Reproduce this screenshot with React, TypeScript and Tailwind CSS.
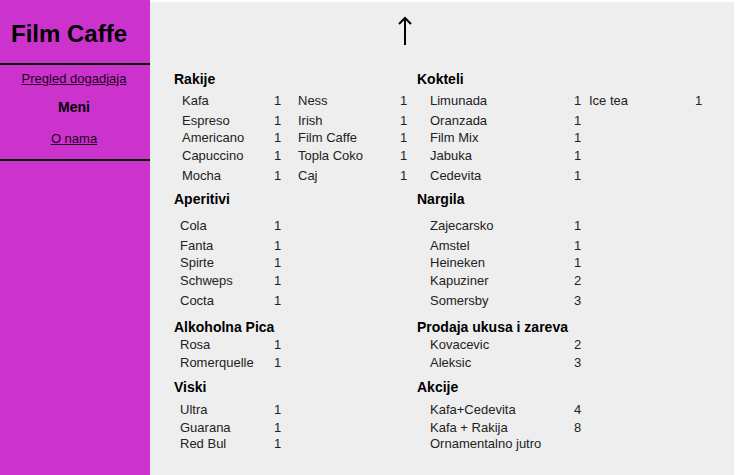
type Item = [name: string, price: string];
type Row = Item[];

interface MenuSection {
  title: string;
  rows: Row[];
  /** Space above the heading and between the heading and the table */
  spacing: string;
  /** Left inset of the item table */
  inset: string;
  /** Column widths: name, price, second name; the last price takes the rest */
  columns: [string, string, string];
}

const ROW_HEIGHTS = ['h-5', 'h-[17px]', 'h-[18px]', 'h-5', 'h-4'];
const SHORT_ROW_HEIGHTS = ['h-[18px]', 'h-4', 'h-4'];

const LEFT_COLUMNS: [string, string, string] = ['w-[94px]', 'w-6', 'w-[102px]'];
const RIGHT_COLUMNS: [string, string, string] = ['w-36', 'w-[15px]', 'w-[106px]'];

const sections: MenuSection[] = [
  {
    title: 'Rakije',
    spacing: 'gap-1.5',
    inset: 'pl-2',
    columns: ['w-[92px]', 'w-6', 'w-[102px]'],
    rows: [
      [['Kafa', '1'], ['Ness', '1']],
      [['Espreso', '1'], ['Irish', '1']],
      [['Americano', '1'], ['Film Caffe', '1']],
      [['Capuccino', '1'], ['Topla Coko', '1']],
      [['Mocha', '1'], ['Caj', '1']],
    ],
  },
  {
    title: 'Kokteli',
    spacing: 'gap-1.5',
    inset: 'pl-[13px]',
    columns: RIGHT_COLUMNS,
    rows: [
      [['Limunada', '1'], ['Ice tea', '1']],
      [['Oranzada', '1']],
      [['Film Mix', '1']],
      [['Jabuka', '1']],
      [['Cedevita', '1']],
    ],
  },
  {
    title: 'Aperitivi',
    spacing: 'mt-[7px] gap-[11px]',
    inset: 'pl-1.5',
    columns: LEFT_COLUMNS,
    rows: [[['Cola', '1']], [['Fanta', '1']], [['Spirte', '1']], [['Schweps', '1']], [['Cocta', '1']]],
  },
  {
    title: 'Nargila',
    spacing: 'mt-[7px] gap-[11px]',
    inset: 'pl-[13px]',
    columns: RIGHT_COLUMNS,
    rows: [
      [['Zajecarsko', '1']],
      [['Amstel', '1']],
      [['Heineken', '1']],
      [['Kapuziner', '2']],
      [['Somersby', '3']],
    ],
  },
  {
    title: 'Alkoholna Pica',
    spacing: 'mt-2.5 gap-0.5',
    inset: 'pl-1.5',
    columns: LEFT_COLUMNS,
    rows: [[['Rosa', '1']], [['Romerquelle', '1']]],
  },
  {
    title: 'Prodaja ukusa i zareva',
    spacing: 'mt-2.5 gap-0.5',
    inset: 'pl-[13px]',
    columns: RIGHT_COLUMNS,
    rows: [[['Kovacevic', '2']], [['Aleksic', '3']]],
  },
  {
    title: 'Viski',
    spacing: 'mt-2 gap-[7px]',
    inset: 'pl-1.5',
    columns: LEFT_COLUMNS,
    rows: [[['Ultra', '1']], [['Guarana', '1']], [['Red Bul', '1']]],
  },
  {
    title: 'Akcije',
    spacing: 'mt-2 gap-[7px]',
    inset: 'pl-[13px]',
    columns: RIGHT_COLUMNS,
    rows: [[['Kafa+Cedevita', '4']], [['Kafa + Rakija', '8']], [['Ornamentalno jutro', '']]],
  },
];

function Section({ title, rows, spacing, inset, columns }: MenuSection) {
  const heights = rows.length === 5 ? ROW_HEIGHTS : SHORT_ROW_HEIGHTS;
  return (
    <section className={`flex flex-col ${spacing}`}>
      <h2 className="text-sm leading-4 font-bold text-black">{title}</h2>
      <div className={inset}>
        <table aria-label={title} className="w-full table-fixed text-left">
          <colgroup>
            <col className={columns[0]} />
            <col className={columns[1]} />
            <col className={columns[2]} />
            <col />
          </colgroup>
          <tbody>
            {rows.map((row, i) => (
              <tr key={row[0][0]} className={heights[i]}>
                {row.flatMap(([name, price]) => [
                  <td key={name} className="p-0 align-top whitespace-nowrap">
                    {name}
                  </td>,
                  <td key={`${name}-price`} className="p-0 align-top">
                    {price}
                  </td>,
                ])}
              </tr>
            ))}
          </tbody>
        </table>
      </div>
    </section>
  );
}

export default function App() {
  return (
    <div className="flex min-h-screen bg-white font-['Liberation_Sans',Arial,sans-serif] text-[13px] leading-4 text-[#222222]">
      <aside className="w-[150px] shrink-0 bg-[#cc33cc] text-black">
        <h1 className="pt-5 pb-[15px] pl-[11px] text-2xl leading-7 font-bold">Film Caffe</h1>
        <nav className="flex flex-col items-center border-y-2 border-black pt-1.5 pr-0.5 pb-3">
          <a href="#dogadjaji" className="text-[#220022] underline">
            Pregled dogadjaja
          </a>
          <a href="#meni" aria-current="page" className="mt-3 mb-4 text-sm leading-4 font-bold">
            Meni
          </a>
          <a href="#o-nama" className="text-[#220022] underline">
            O nama
          </a>
        </nav>
      </aside>
      <main id="meni" className="mt-0.5 mr-0.5 grow bg-[#eeeeee] pt-3.5 pl-6">
        <div className="grid grid-cols-[243fr_317fr]">
          <a href="#top" aria-label="Nazad na vrh" className="mr-1 mb-[25px] justify-self-end">
            <svg width="16" height="30" viewBox="0 0 16 30" fill="none" stroke="#000" strokeWidth="2">
              <path d="M8 29V2M2 8L8 2L14 8" />
            </svg>
          </a>
        </div>
        <div className="grid grid-cols-[243fr_317fr]">
          {sections.map((section) => (
            <Section key={section.title} {...section} />
          ))}
        </div>
      </main>
    </div>
  );
}
